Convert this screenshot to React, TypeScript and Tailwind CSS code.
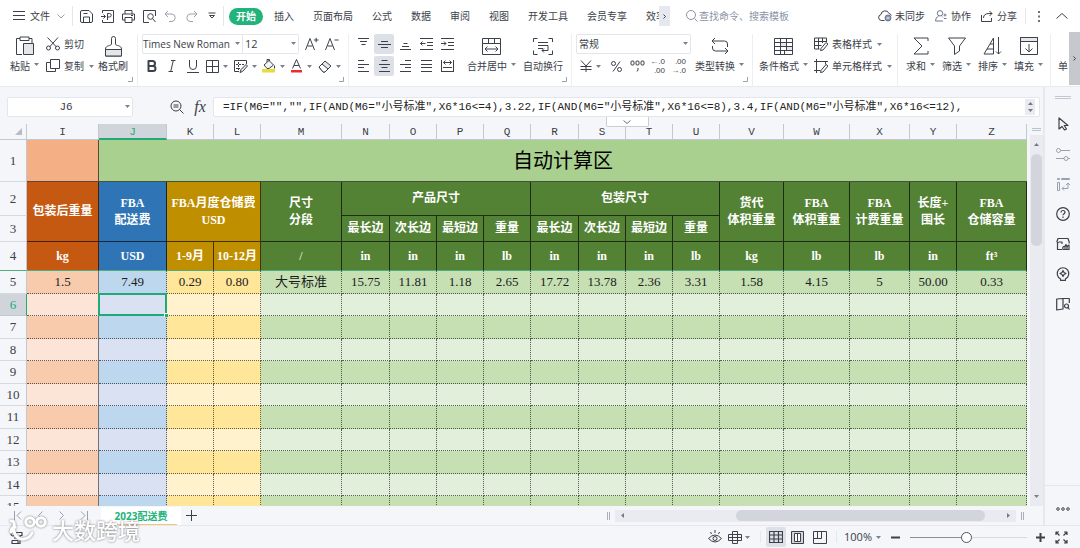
import type { ReactNode } from "react";
import clsx from "clsx";

const UI_FONT = "font-['Open_Sans','Noto_Sans_CJK_SC',sans-serif]";
const SHEET_FONT = "font-['Liberation_Serif','Noto_Sans_CJK_SC',serif]";
const MONO_FONT = "font-['Liberation_Mono','Noto_Sans_CJK_SC',monospace]";

type IconProps = { w?: number; h?: number; sw?: number; className?: string; children: ReactNode };

const Icon = ({ w = 14, h = 14, sw = 1, className, children }: IconProps) => (
  <svg
    width={w}
    height={h}
    viewBox={`0 0 ${w} ${h}`}
    fill="none"
    stroke="currentColor"
    strokeWidth={sw}
    strokeLinejoin="round"
    className={clsx("shrink-0", className)}
    aria-hidden="true"
  >
    {children}
  </svg>
);

const Caret = ({ className }: { className?: string }) => (
  <svg width="5" height="3" viewBox="0 0 5 3" className={clsx("shrink-0 fill-[#7b818c]", className)} aria-hidden="true">
    <path d="M0 0h5L2.500 3z" />
  </svg>
);

const Separator = ({ className }: { className?: string }) => (
  <span className={clsx("w-px shrink-0 bg-[#e5e7eb]", className)} />
);

const Launcher = () => (
  <Icon w={5} h={5} className="absolute right-1 bottom-1 text-gray-400">
    <path d="M4.500 0v4.500H0" />
  </Icon>
);

const Group = ({ className, launcher, children }: { className?: string; launcher?: boolean; children: ReactNode }) => (
  <div className={clsx("relative flex shrink-0 border-r border-[#eceef1]", className)}>
    {children}
    {launcher && <Launcher />}
  </div>
);

type BigButtonProps = { label: string; caret?: boolean; className?: string; children: ReactNode };

const BigButton = ({ label, caret, className, children }: BigButtonProps) => (
  <button type="button" className={clsx("flex shrink-0 flex-col items-center", className)}>
    <span className="flex h-6 items-center">{children}</span>
    <span className="flex h-4 items-center gap-1 whitespace-nowrap">
      {label}
      {caret && <Caret className="-mt-1" />}
    </span>
  </button>
);

const SmallButton = ({ label, caret, children }: { label: string; caret?: boolean; children: ReactNode }) => (
  <button type="button" className="flex h-5 items-center gap-1 whitespace-nowrap">
    {children}
    <span>{label}</span>
    {caret && <Caret className="ml-px" />}
  </button>
);

const IconButton = ({
  label,
  active,
  className,
  children,
}: {
  label: string;
  active?: boolean;
  className?: string;
  children: ReactNode;
}) => (
  <button
    type="button"
    aria-label={label}
    className={clsx("flex shrink-0 items-center justify-center", active && "rounded-xs bg-[#dde1e7]", className)}
  >
    {children}
  </button>
);

/* ---------- menu bar ---------- */

const tabs = ["插入", "页面布局", "公式", "数据", "审阅", "视图", "开发工具", "会员专享"];

const MenuBar = () => (
  <header className="flex h-8 shrink-0 items-center bg-white">
    <button type="button" className="ml-[13px] flex items-center gap-[5px]">
      <Icon w={12} h={10}>
        <path d="M0 .5h12M0 4.500h12M0 8.500h12" />
      </Icon>
      文件
      <Icon w={8} h={5} className="ml-0.5 text-gray-400">
        <path d="M.5.5L4 4 7.500.5" />
      </Icon>
    </button>
    <Separator className="ml-[7px] h-5" />
    <div className="ml-[7px] flex items-center gap-2">
      <IconButton label="保存">
        <Icon w={13} h={13}>
          <path d="M.5 2a1.500 1.500 0 011.500-1.500H9l3.500 3.500V11a1.500 1.500 0 01-1.500 1.500H2A1.500 1.500 0 01.5 11zM3.500 12.500V7h6v5.500M3.500 3.500h4" />
        </Icon>
      </IconButton>
      <IconButton label="输出为PDF">
        <Icon w={13} h={13}>
          <path d="M1.500 3V.5h11v12h-11V10M0 6.500h4.500M2.500 4.500l2 2-2 2M6.500 10V3.500h2a1.700 1.700 0 010 3.500h-2" />
        </Icon>
      </IconButton>
      <IconButton label="打印">
        <Icon w={13} h={13}>
          <path d="M3 4V.5h7V4M3 10H.5V4h12v6H10M3 7.500h7v5H3zM9 5.500h2" />
        </Icon>
      </IconButton>
      <IconButton label="打印预览">
        <Icon w={13} h={13}>
          <path d="M12.500 6V.5H.5v12H6" />
          <circle cx="7.500" cy="6.500" r="2.800" />
          <path d="M9.500 8.500l3 3.500" />
        </Icon>
      </IconButton>
      <IconButton label="撤销" className="text-gray-400">
        <Icon w={13} h={13}>
          <path d="M4 1L1 4l3 3M1 4h7a3.800 3.800 0 010 7.500H5" />
        </Icon>
      </IconButton>
      <IconButton label="恢复" className="text-gray-400">
        <Icon w={13} h={13}>
          <path d="M9 1l3 3-3 3M12 4H5a3.800 3.800 0 000 7.500h3" />
        </Icon>
      </IconButton>
      <IconButton label="自定义快速访问工具栏" className="ml-0.5">
        <Icon w={8} h={8}>
          <path d="M.5 1h7M1.500 3.500L4 6l2.500-2.500z" />
        </Icon>
      </IconButton>
    </div>
    <Separator className="ml-[7px] h-5" />
    <nav className="ml-[5px] flex min-w-0 items-center">
      <button type="button" className="h-[17px] w-[34px] shrink-0 rounded-full bg-[#22b37b] font-bold text-white">
        开始
      </button>
      <div className="ml-[11px] flex items-center gap-[19px] whitespace-nowrap">
        {tabs.map((tab) => (
          <button key={tab} type="button">
            {tab}
          </button>
        ))}
        <button type="button" className="w-[13px] overflow-hidden text-left">
          效率
        </button>
      </div>
      <IconButton label="更多选项卡" className="h-5 w-[11px] bg-[#e6e8ef]">
        <Icon w={3} h={5}>
          <path d="M.5.5l2 2-2 2" />
        </Icon>
      </IconButton>
    </nav>
    <label className="ml-4 flex min-w-0 flex-1 items-center gap-px text-[#8b93a5]">
      <Icon w={12} h={12}>
        <circle cx="5" cy="5" r="4.500" />
        <path d="M8.500 8.500l3 3" />
      </Icon>
      <input
        type="text"
        aria-label="查找命令、搜索模板"
        placeholder="查找命令、搜索模板"
        className="w-28 min-w-0 bg-transparent outline-none placeholder:text-[#8b93a5]"
      />
    </label>
    <div className="flex shrink-0 items-center gap-[10px]">
      <button type="button" className="flex items-center gap-[3px]">
        <Icon w={14} h={12}>
          <path d="M6.500 10.500H3.500a3 3 0 01-.6-5.900A4.200 4.200 0 0111 3.500a3 3 0 012.300 2" />
          <circle cx="10" cy="8" r="3" className="fill-[#8d96ad] stroke-[#6b7690]" />
          <path d="M8.500 8h3" className="stroke-white" />
        </Icon>
        未同步
      </button>
      <button type="button" className="flex items-center gap-1">
        <Icon w={12} h={12} className="text-[#6b7690]">
          <circle cx="5" cy="3.300" r="2.700" />
          <path d="M3.500 6.300Q.5 7 .5 11h7.500M7 6.500l1 1M8.500 5h3M10 3.500v3M9 8.500h2.500" />
        </Icon>
        协作
      </button>
      <button type="button" className="flex items-center gap-1">
        <Icon w={12} h={12}>
          <path d="M.5 5v6.500h10V8M2.500 8c0-3 2-4.500 5.500-4.500h3M8.500 1l2.500 2.500L8.500 6" />
        </Icon>
        分享
      </button>
    </div>
    <Separator className="ml-2 h-4" />
    <IconButton label="更多" className="ml-3">
      <svg width="2" height="11" viewBox="0 0 2 11" className="fill-gray-500" aria-hidden="true">
        <path d="M0 0h2v2H0zM0 4.500h2v2H0zM0 9h2v2H0z" />
      </svg>
    </IconButton>
    <IconButton label="收起功能区" className="mr-3 ml-4">
      <Icon w={12} h={6}>
        <path d="M.5 5.500L6 .5l5.500 5" />
      </Icon>
    </IconButton>
  </header>
);

/* ---------- ribbon ---------- */

const alignTop = [
  { label: "顶端对齐", d: "M1 1.500h11M3 4.500h7M4.500 7.500h4" },
  { label: "垂直居中", d: "M3 4.500h7M0 7.500h13M3 10.500h7", active: true },
  { label: "底端对齐", d: "M4.500 6.500h4M3 9.500h7M1 12.500h11" },
  { label: "减少缩进量", d: "M0 1.500h13M7 5.500h6M7 8.500h6M0 12.500h13M.5 6.500h5M2.500 4.500l-2 2 2 2" },
  { label: "增加缩进量", d: "M0 1.500h13M7 5.500h6M7 8.500h6M0 12.500h13M0 6.500h5M3 4.500l2 2-2 2" },
];

const alignBottom = [
  { label: "左对齐", d: "M1 1.500h6M1 5.500h11M1 8.500h6M1 12.500h11" },
  { label: "水平居中", d: "M3.500 1.500h6M1 5.500h11M3.500 8.500h6M1 12.500h11", active: true },
  { label: "右对齐", d: "M6 1.500h6M1 5.500h11M6 8.500h6M1 12.500h11" },
  { label: "两端对齐", d: "M1 1.500h11M1 5.500h11M1 8.500h11M1 12.500h11" },
  { label: "分散对齐", d: "M.5 1v12M12.500 1v12M2.500 3.500h8M4.500 1.500l-2 2 2 2M8.500 1.500l2 2-2 2M2 8.500h9M0 12.500h13" },
];

const decimals = [
  { label: "增加小数位数", top: "←.0", bottom: ".00" },
  { label: "减少小数位数", top: ".00", bottom: "→.0" },
];

const PencilOverlay = () => <path d="M7 11.500l5-6 2 1.500-5 6-2.500.5z" className="fill-white" />;

const Ribbon = () => (
  <section className="flex h-[54px] shrink-0 bg-white">
    <div className="flex min-w-0 flex-1 overflow-hidden pt-0.5">
      <Group launcher className="w-[138px] pl-[10px]">
        <BigButton label="粘贴" caret>
          <Icon w={20} h={20}>
            <path d="M7 18.500H1.500v-16H5M14 2.500h3V7M5 1h9v3.500H5z" />
            <path d="M8.500 7.500h10v11h-10z" className="fill-[#e4e6ea]" />
          </Icon>
        </BigButton>
        <div className="ml-[7px] flex flex-col gap-0.5">
          <SmallButton label="剪切">
            <Icon>
              <path d="M1.500.5l9 9.500M12 .5L3.500 10" />
              <circle cx="2.500" cy="11" r="2" />
              <circle cx="11.500" cy="11" r="2" />
            </Icon>
          </SmallButton>
          <SmallButton label="复制" caret>
            <Icon>
              <path d="M4.500.5h9v9h-9zM4.500 3.500h-4v9h9v-3" />
            </Icon>
          </SmallButton>
        </div>
        <BigButton label="格式刷" className="ml-1">
          <Icon w={17} h={21}>
            <path d="M6.500 8V2.500a2 2 0 014 0V8c0 2 6 1 6 5v7H.5v-7c0-4 6-3 6-5z" />
            <path d="M.5 13.500h16v6.500H.5z" className="fill-[#e4e6ea]" />
          </Icon>
        </BigButton>
      </Group>

      <Group launcher className="w-[211px] flex-col gap-0.5 pl-1">
        <div className="flex h-5 items-center">
          <div className="relative w-[101px]">
            <select
              aria-label="字体"
              className="h-5 w-full appearance-none rounded-l-xs border border-[#e3e6ea] bg-white text-[10px]"
            >
              <option>Times New Roman</option>
            </select>
            <Caret className="pointer-events-none absolute top-2 right-[3px]" />
          </div>
          <div className="relative w-14">
            <select
              aria-label="字号"
              className="h-5 w-full appearance-none rounded-r-xs border border-l-0 border-[#e3e6ea] bg-white pl-0.5 text-[11px]"
            >
              <option>12</option>
            </select>
            <Caret className="pointer-events-none absolute top-2 right-[3px]" />
          </div>
          <IconButton label="增大字号" className="ml-[6px]">
            <Icon w={14} h={14}>
              <path d="M.5 13L5 1.500 9.500 13M2.500 9h5M9 3h4.500M11.200.8v4.500" />
            </Icon>
          </IconButton>
          <IconButton label="减小字号" className="ml-[6px]">
            <Icon w={14} h={14}>
              <path d="M.5 13L5 1.500 9.500 13M2.500 9h5M9.500 3h4" />
            </Icon>
          </IconButton>
        </div>
        <div className="flex h-5 items-center">
          <IconButton label="加粗" className="w-5">
            <Icon w={10} h={12} sw={2}>
              <path d="M1.500 1h4a2.500 2.500 0 010 5h-4zM1.500 6h4.500a2.500 2.500 0 010 5H1.500z" />
            </Icon>
          </IconButton>
          <IconButton label="倾斜" className="w-5">
            <Icon w={8} h={12}>
              <path d="M3 .5h4.500M.5 11.500H5M5.300.5l-2.600 11" />
            </Icon>
          </IconButton>
          <IconButton label="下划线" className="w-[21px]">
            <Icon w={12} h={13}>
              <path d="M2.500 0v6a3.500 3.500 0 007 0V0M0 12.500h12" />
            </Icon>
          </IconButton>
          <IconButton label="边框" className="w-7 gap-1">
            <Icon w={13} h={13}>
              <path d="M.5.5h12v12H.5zM6.500.5v12M.5 6.500h12" />
            </Icon>
            <Caret />
          </IconButton>
          <IconButton label="绘制边框" className="w-7 gap-1">
            <Icon w={14} h={13}>
              <path d="M12.500 4V.5H.5v11H5" />
              <path d="M4.500 2v9M2 4.500h8M2 8.500h4" strokeDasharray="2 1" />
              <path d="M7 9.500l5-5 1.500 1.500-5 5.500-2.500 1z" className="fill-gray-200" />
            </Icon>
            <Caret />
          </IconButton>
          <IconButton label="填充颜色" className="w-7 gap-1">
            <Icon w={14} h={14}>
              <path d="M2 6l5-4.500L11.500 6 7 9.500H5z" className="fill-gray-100" />
              <path d="M5 3V.5h2.500V2M12.500 6.500v3" />
              <path d="M0 10h13v3.500H0z" className="fill-[#e6dc3a] stroke-none" />
            </Icon>
            <Caret />
          </IconButton>
          <IconButton label="字体颜色" className="w-7 gap-1">
            <Icon w={13} h={14}>
              <path d="M2.500 9.500L6.500.5l4 9M4 6.500h5" />
              <path d="M1 11h11v2.500H1z" className="fill-[#e8302e] stroke-none" />
            </Icon>
            <Caret />
          </IconButton>
          <IconButton label="清除" className="w-7 gap-1">
            <Icon w={14} h={13}>
              <path d="M1 7l6-6 6 5-6 6H5z" className="fill-gray-200" />
              <path d="M4 4l6 5-3 3H5L1 7z" className="fill-white" />
            </Icon>
            <Caret />
          </IconButton>
        </div>
      </Group>

      <Group launcher className="w-[223px] pl-1">
        <div className="flex flex-col gap-0.5">
          {[alignTop, alignBottom].map((row, i) => (
            <div key={i} className="flex gap-px">
              {row.map((item) => (
                <IconButton key={item.label} label={item.label} active={item.active} className="h-5 w-5">
                  <Icon w={13} h={14}>
                    <path d={item.d} />
                  </Icon>
                </IconButton>
              ))}
            </div>
          ))}
        </div>
        <BigButton label="合并居中" caret className="ml-[10px]">
          <Icon w={20} h={18}>
            <path d="M.5 1.500h18v16H.5zM.5 6.500h18M6.500 1.500v5M12.500 1.500v5M3 12h13M5.500 9.500L3 12l2.500 2.500M13.500 9.500L16 12l-2.500 2.500" />
          </Icon>
        </BigButton>
        <BigButton label="自动换行" className="ml-[7px]">
          <Icon w={20} h={18}>
            <path d="M4.500 1.500h-4V5M.5 13.500v4h4M15.500 1.500h4V5M19.500 13.500v4h-4M5 5.500h10M5 8.500h10v5H9M5 11.500h5M11 11.500l-2 2 2 2" />
          </Icon>
        </BigButton>
      </Group>

      <Group launcher className="w-[181px] pl-1">
        <div className="flex flex-col gap-0.5">
          <div className="relative w-[115px]">
            <select
              aria-label="数字格式"
              className="h-5 w-full appearance-none rounded-xs border border-[#e3e6ea] bg-white pl-0.5 text-[10px]"
            >
              <option>常规</option>
            </select>
            <Caret className="pointer-events-none absolute top-2 right-[3px]" />
          </div>
          <div className="flex h-5 items-center">
            <IconButton label="货币" className="w-[29px] gap-1">
              <Icon w={12} h={12}>
                <path d="M1 .5l5 5.500 5-5.500M6 6v6M.5 6.500h11M.5 9.500h11" />
              </Icon>
              <Caret />
            </IconButton>
            <IconButton label="百分比" className="w-[22px]">
              <Icon w={11} h={11}>
                <circle cx="2.500" cy="2.500" r="2" />
                <circle cx="8.500" cy="8.500" r="2" />
                <path d="M9 .5l-7 10" />
              </Icon>
            </IconButton>
            <IconButton label="千位分隔" className="w-[21px]">
              <Icon w={15} h={12}>
                <rect x="1" y="1" width="3" height="4" rx="1" />
                <rect x="6" y="1" width="3" height="4" rx="1" />
                <rect x="11" y="1" width="3" height="4" rx="1" />
                <path d="M8 8v2l-1 1.500" />
              </Icon>
            </IconButton>
            {decimals.map((item) => (
              <button
                key={item.label}
                type="button"
                aria-label={item.label}
                className="flex w-[21px] flex-col items-end pr-1 font-['Liberation_Sans',sans-serif] text-[8px] leading-[9px]"
              >
                <span>{item.top}</span>
                <span>{item.bottom}</span>
              </button>
            ))}
          </div>
        </div>
        <BigButton label="类型转换" caret className="ml-1">
          <Icon w={18} h={18}>
            <path d="M4 1L1 4l3 3M1 4h12.500a3 3 0 013 3v3M14 17l3-3-3-3M17 14H4.500a3 3 0 01-3-3V9" />
          </Icon>
        </BigButton>
      </Group>

      <Group className="w-[145px] pl-[6px]">
        <BigButton label="条件格式" caret>
          <Icon w={19} h={18}>
            <path d="M6.500 5.500h6v4h-6zM12.500 9.500h6v4h-6z" className="fill-gray-200" />
            <path d="M.5 1.500h18v16H.5zM.5 5.500h18M.5 9.500h18M.5 13.500h18M6.500 1.500v16M12.500 1.500v8M10.500 13.500v4" />
          </Icon>
        </BigButton>
        <div className="ml-[6px] flex flex-col gap-0.5">
          <SmallButton label="表格样式" caret>
            <Icon>
              <path d="M12.500 5V1H.5v11h5M4.500 1v11M8.500 1v5M.5 4.500h12M.5 8.500h7" />
              <PencilOverlay />
            </Icon>
          </SmallButton>
          <SmallButton label="单元格样式" caret>
            <Icon>
              <path d="M0 2.500h14M2.500 0v14M11.500 2.500v3M2.500 11.500h4M0 11.500h2" />
              <PencilOverlay />
            </Icon>
          </SmallButton>
        </div>
      </Group>

      <Group className="w-[153px] gap-[7px] pl-2">
        <BigButton label="求和" caret>
          <Icon w={16} h={18}>
            <path d="M15 4V1H1l8 8-8 8h14v-3" />
          </Icon>
        </BigButton>
        <BigButton label="筛选" caret>
          <Icon w={18} h={18}>
            <path d="M.5 1h17L11.500 9v5l-5 3.500V9z" />
          </Icon>
        </BigButton>
        <BigButton label="排序" caret>
          <Icon w={19} h={18}>
            <path d="M1 17L10.500 1v16zM4 12h6.500M7 7h3.500M15.500 0v17M13 14.500l2.500 2.500 2.500-2.500" />
          </Icon>
        </BigButton>
        <BigButton label="填充" caret>
          <Icon w={18} h={18}>
            <path d="M.5.5h17v4H.5z" className="fill-gray-200" />
            <path d="M.5.5h17v17H.5zM9 7v8M5.500 11.500L9 15l3.500-3.500" />
          </Icon>
        </BigButton>
      </Group>
      <BigButton label="单" className="ml-[7px]">
        <span />
      </BigButton>
    </div>
    <IconButton label="向右滚动功能区" className="h-[53px] w-[11px] bg-[#c6c8ce]">
      <Icon w={3} h={5}>
        <path d="M.5.5l2 2-2 2" />
      </Icon>
    </IconButton>
  </section>
);

/* ---------- formula bar ---------- */

const formula =
  '=IF(M6="","",IF(AND(M6="小号标准",X6*16<=4),3.22,IF(AND(M6="小号标准",X6*16<=8),3.4,IF(AND(M6="小号标准",X6*16<=12),';

const FormulaBar = () => (
  <div className="relative flex h-[37px] shrink-0 items-center pt-[3px] pr-[3px] pl-[7px]">
    <div className="relative w-[126px] shrink-0">
      <input
        aria-label="名称框"
        defaultValue="J6"
        className={`h-5 w-full rounded-xs border border-[#e3e6ea] bg-white pr-2 text-center text-[11px] ${MONO_FONT}`}
      />
      <Caret className="absolute top-2 right-[3px]" />
    </div>
    <IconButton label="缩小" className="ml-[37px]">
      <Icon w={15} h={14}>
        <circle cx="6" cy="6" r="5" />
        <path d="M9.500 9.500l4 4M3.500 5h5M3.500 7h5" />
      </Icon>
    </IconButton>
    <button type="button" className="ml-2 w-[14px] font-['Liberation_Serif',serif] text-base leading-5 italic">
      fx
    </button>
    <div className="ml-[6px] flex h-5 min-w-0 flex-1 items-center rounded-xs border border-[#e3e6ea] bg-white pr-1 pl-[9px]">
      <input
        aria-label="编辑栏"
        defaultValue={formula}
        className={`min-w-0 flex-1 bg-transparent text-[11px] text-[#222] outline-none ${MONO_FONT}`}
      />
      <IconButton label="展开编辑栏" className="h-4 w-[10px] bg-[#e9ebf1]">
        <svg width="5" height="10" viewBox="0 0 5 10" className="fill-[#737a8c]" aria-hidden="true">
          <path d="M0 3L2.500 0 5 3zM0 7h5L2.500 10z" />
        </svg>
      </IconButton>
    </div>
    <button
      type="button"
      aria-label="折叠编辑栏"
      className="absolute top-[30px] left-[58.1%] z-20 flex h-[10px] w-[43px] items-center justify-center rounded-b-xs border border-t-0 border-[#c9cdd4] bg-white"
    >
      <Icon w={8} h={4} className="text-gray-500">
        <path d="M.5.5L4 3.500 7.500.5" />
      </Icon>
    </button>
  </div>
);

/* ---------- sheet ---------- */

const columns = [
  { name: "I", width: 72 },
  { name: "J", width: 68 },
  { name: "K", width: 47 },
  { name: "L", width: 47 },
  { name: "M", width: 81 },
  { name: "N", width: 48 },
  { name: "O", width: 47 },
  { name: "P", width: 47 },
  { name: "Q", width: 47 },
  { name: "R", width: 48 },
  { name: "S", width: 47 },
  { name: "T", width: 47 },
  { name: "U", width: 47 },
  { name: "V", width: 64 },
  { name: "W", width: 66 },
  { name: "X", width: 60 },
  { name: "Y", width: 47 },
  { name: "Z", width: 70 },
];

const units = ["kg", "USD", "1-9月", "10-12月", "/", "in", "in", "in", "lb", "in", "in", "in", "lb", "kg", "lb", "lb", "in", "ft³"];

const values = [
  "1.5", "7.49", "0.29", "0.80", "大号标准", "15.75", "11.81", "1.18", "2.65",
  "17.72", "13.78", "2.36", "3.31", "1.58", "4.15", "5", "50.00", "0.33",
];

const sides = ["最长边", "次长边", "最短边", "重量", "最长边", "次长边", "最短边", "重量"];

const rowNumbers = [5, 6, 7, 8, 9, 10, 11, 12, 13, 14, 15];

const headColor = (col: number) =>
  col === 0 ? "bg-[#c65911]" : col === 1 ? "bg-[#2f75b5]" : col < 4 ? "bg-[#bf8f00]" : "bg-[#548235]";

const bodyColor = (col: number, even: boolean) => {
  if (col === 0) return even ? "bg-[#fce4d6]" : "bg-[#f8cbad]";
  if (col === 1) return even ? "bg-[#d9e1f2]" : "bg-[#bdd7ee]";
  if (col < 4) return even ? "bg-[#fff2cc]" : "bg-[#ffe699]";
  return even ? "bg-[#e2efda]" : "bg-[#c6e0b4]";
};

const RowHead = ({ n, active, frozen }: { n: number; active?: boolean; frozen?: boolean }) => (
  <th
    scope="row"
    className={clsx(
      "border-r border-b p-0 text-center text-[13px] leading-4 font-normal",
      active
        ? "border-r-[#22a978] border-b-[#c3c8d0] bg-[#d0d4db] text-[#22a978]"
        : "border-r-[#c3c8d0] bg-[#f5f6fa] text-[#3b3f46]",
      !active && (frozen ? "border-b-[#4cae80]" : "border-b-[#d5d9e0]"),
    )}
  >
    {n}
  </th>
);

const HeadCell = ({
  col,
  rowSpan,
  colSpan,
  children,
}: {
  col: number;
  rowSpan?: number;
  colSpan?: number;
  children: ReactNode;
}) => (
  <th
    scope="col"
    rowSpan={rowSpan}
    colSpan={colSpan}
    className={clsx(
      "border-r border-b border-black/65 p-0 text-center text-xs leading-[17px] font-bold whitespace-nowrap text-white",
      headColor(col),
    )}
  >
    {children}
  </th>
);

const Sheet = () => (
  <div className="min-w-0 flex-1 overflow-hidden bg-white">
    <table className={`w-full table-fixed border-separate border-spacing-0 ${SHEET_FONT}`}>
      <colgroup>
        <col className="w-[27px]" />
        {columns.map((c) => (
          <col key={c.name} style={{ width: c.width }} />
        ))}
      </colgroup>
      <thead>
        <tr className={`h-4 text-[11px] leading-3 text-[#3b3f46] ${MONO_FONT}`}>
          <td className="border-r border-b border-[#c3c8d0] bg-[#f5f6fa] p-0">
            <svg width="7" height="7" viewBox="0 0 7 7" className="ml-[15px] fill-[#b9bcc2]" aria-hidden="true">
              <path d="M7 0v7H0z" />
            </svg>
          </td>
          {columns.map((c) => (
            <th
              key={c.name}
              scope="col"
              className={clsx(
                "border-r border-r-[#c3c8d0] p-0 pt-px font-normal",
                c.name === "J"
                  ? "border-b-2 border-b-[#22a978] bg-[#d0d4db] text-[#22a978]"
                  : "border-b border-b-[#c3c8d0] bg-[#f5f6fa]",
              )}
            >
              {c.name}
            </th>
          ))}
        </tr>
      </thead>
      <tbody>
        <tr className="h-[42px]">
          <RowHead n={1} />
          <td className="border-r border-b border-black/60 bg-[#f4b084] p-0" />
          <td colSpan={17} className="border-b border-black/60 bg-[#a9d08e] p-0 text-center text-xl leading-6 text-black">
            自动计算区
          </td>
        </tr>
        <tr className="h-[34px]">
          <RowHead n={2} />
          <HeadCell col={0} rowSpan={2}>包装后重量</HeadCell>
          <HeadCell col={1} rowSpan={2}>FBA<br />配送费</HeadCell>
          <HeadCell col={2} rowSpan={2} colSpan={2}>FBA月度仓储费<br />USD</HeadCell>
          <HeadCell col={4} rowSpan={2}>尺寸<br />分段</HeadCell>
          <HeadCell col={5} colSpan={4}>产品尺寸</HeadCell>
          <HeadCell col={9} colSpan={4}>包装尺寸</HeadCell>
          <HeadCell col={13} rowSpan={2}>货代<br />体积重量</HeadCell>
          <HeadCell col={14} rowSpan={2}>FBA<br />体积重量</HeadCell>
          <HeadCell col={15} rowSpan={2}>FBA<br />计费重量</HeadCell>
          <HeadCell col={16} rowSpan={2}>长度+<br />围长</HeadCell>
          <HeadCell col={17} rowSpan={2}>FBA<br />仓储容量</HeadCell>
        </tr>
        <tr className="h-[26px]">
          <RowHead n={3} />
          {sides.map((side, i) => (
            <HeadCell key={i} col={5 + i}>{side}</HeadCell>
          ))}
        </tr>
        <tr className="h-[29px]">
          <RowHead n={4} frozen />
          {units.map((unit, i) => (
            <th
              key={i}
              className={clsx(
                "border-r border-b border-r-black/65 border-b-[#4cae80] p-0 text-center text-xs leading-4 whitespace-nowrap text-white",
                unit === "/" ? "font-normal" : "font-bold",
                headColor(i),
              )}
            >
              {unit}
            </th>
          ))}
        </tr>
        {rowNumbers.map((n) => {
          const even = n % 2 === 0;
          return (
            <tr key={n} className={even ? "h-[22px]" : "h-[23px]"}>
              <RowHead n={n} active={n === 6} />
              {columns.map((c, i) => {
                const selected = n === 6 && c.name === "J";
                return (
                  <td
                    key={c.name}
                    className={clsx(
                      "border-r border-b border-b-black/60 p-0 text-center text-[13px] leading-4 whitespace-nowrap text-[#1c1c1c] [border-bottom-style:dotted]",
                      i === 0 ? "border-r-[#6f7275]" : "border-r-black/60 [border-right-style:dotted]",
                      selected && "relative",
                      bodyColor(i, even),
                    )}
                  >
                    {n === 5 && values[i]}
                    {selected && (
                      <span className="absolute -inset-px z-10 border-2 border-[#22a978]">
                        <span className="absolute -right-[3px] -bottom-[3px] h-1 w-1 border-t border-l border-white bg-[#22a978]" />
                      </span>
                    )}
                  </td>
                );
              })}
            </tr>
          );
        })}
      </tbody>
    </table>
  </div>
);

const VerticalScroll = () => (
  <div className="flex w-4 shrink-0 flex-col pl-[3px]">
    <div className="mx-0.5 my-1 h-[3px] border-y border-[#b9c3cf]" />
    <div className="flex min-h-0 flex-1 flex-col items-center bg-[#e9ebf1] py-2">
      <svg width="5" height="3" viewBox="0 0 5 3" className="fill-[#737a8c]" aria-hidden="true">
        <path d="M0 3L2.500 0 5 3z" />
      </svg>
      <div className="mt-2 h-[26%] w-[11px] rounded-full bg-[#d2d5dc]" />
      <Caret className="mt-auto" />
    </div>
  </div>
);

const SheetTabs = () => (
  <div className="flex h-[19px] shrink-0 items-center">
    <div className="flex w-[101px] shrink-0 items-center gap-4 pl-[14px] text-gray-400">
      <IconButton label="第一张工作表">
        <Icon w={8} h={9}><path d="M.5 0v9M7 .5l-4 4 4 4" /></Icon>
      </IconButton>
      <IconButton label="上一张工作表">
        <Icon w={5} h={9}><path d="M4.500.5l-4 4 4 4" /></Icon>
      </IconButton>
      <IconButton label="下一张工作表">
        <Icon w={5} h={9}><path d="M.5.5l4 4-4 4" /></Icon>
      </IconButton>
      <IconButton label="最后一张工作表">
        <Icon w={8} h={9}><path d="M1 .5l4 4-4 4M7.500 0v9" /></Icon>
      </IconButton>
    </div>
    <button type="button" className="relative h-[18px] w-20 shrink-0 bg-white font-bold text-[#22b37b]">
      2023配送费
      <span className="absolute inset-x-1 bottom-0 h-px bg-[#f3c77a]" />
    </button>
    <IconButton label="新建工作表" className="ml-[5px]">
      <Icon w={11} h={11}><path d="M5.500 0v11M0 5.500h11" /></Icon>
    </IconButton>
    <div className="ml-auto flex w-[41.8%] items-center gap-[5px] pr-[19px]">
      <span className="h-2 w-[3px] shrink-0 border-x border-[#aab0bb]" />
      <div className="flex h-3 flex-1 items-center bg-[#e9ebf1] px-[6px]">
        <svg width="3" height="5" viewBox="0 0 3 5" className="fill-[#737a8c]" aria-hidden="true">
          <path d="M3 0v5L0 2.500z" />
        </svg>
        <div className="mr-[22px] ml-auto h-[11px] w-[64%] rounded-full bg-[#d2d5dc]" />
        <svg width="3" height="5" viewBox="0 0 3 5" className="fill-[#737a8c]" aria-hidden="true">
          <path d="M0 0v5l3-2.500z" />
        </svg>
      </div>
      <span className="h-2 w-[3px] shrink-0 border-x border-[#aab0bb]" />
    </div>
  </div>
);

const SideBar = () => (
  <aside className="flex w-[37px] shrink-0 flex-col items-center border-l-2 border-[#e6e8ed] pt-[9px]">
    <div className="h-[3px] w-4 border-y border-[#c3c8d0]" />
    <div className="mt-[18px] flex flex-col gap-4">
      <IconButton label="选择">
        <Icon sw={1.2}><path d="M3 1v11l3-2.500L8.500 13l2-1-2.300-3.500H12z" /></Icon>
      </IconButton>
      <IconButton label="属性" className="text-gray-400">
        <Icon>
          <circle cx="2.500" cy="3.500" r="2" />
          <circle cx="10" cy="11.500" r="2" />
          <path d="M4.500 3.500H14M0 11.500h8M12 11.500h2" />
        </Icon>
      </IconButton>
      <IconButton label="分析" className="text-gray-400">
        <Icon><path d="M1.500 1.500h2v1h-2zM1.500 5.500h2v8h-2zM5.500 1.500h8v1h-8zM12 6.500v5H6.500M10 8L12 6l2 2M8 9.500l-2 2 2 2" /></Icon>
      </IconButton>
      <IconButton label="帮助">
        <Icon sw={1.2}>
          <circle cx="7" cy="7" r="6.300" />
          <path d="M5 5.500a2 2 0 114 0c0 1.300-2 1.300-2 2.800M7 9.500V11" />
        </Icon>
      </IconButton>
      <IconButton label="表情">
        <Icon sw={1.2}>
          <path d="M.8 5L2 1.500h10L13.200 5v1.500M1.500 6v6.500H6M.8 5q1 1.500 2.200 0h3v2M7 12.500c-1-3 1-3.500 2-3l1-2 1 2 2-1.500v4.500z" />
          <path d="M9 12.500v-3M11 12.500V9" />
        </Icon>
      </IconButton>
      <IconButton label="技巧">
        <Icon sw={1.2}>
          <path d="M4.500 11.800a5.800 5.800 0 115 0v1.500h-5z" />
          <path d="M7 3.500l1 2 2 1-2 1-1 2-1-2-2-1 2-1z" />
        </Icon>
      </IconButton>
      <IconButton label="手册">
        <Icon sw={1.2}>
          <path d="M7 12L.7 13V2L7 1.500V12zM7 1.500h6.300V6" />
          <circle cx="10.500" cy="9" r="2" />
          <path d="M12 10.500l1.500 2" />
        </Icon>
      </IconButton>
    </div>
    <div className="mt-auto flex h-10 w-full justify-center border-t border-[#e3e6ea] pt-[21px]">
      <IconButton label="更多工具" className="h-1">
        <Icon w={14} h={4}>
          <circle cx="2" cy="2" r="1.300" />
          <circle cx="7" cy="2" r="1.300" />
          <circle cx="12" cy="2" r="1.300" />
        </Icon>
      </IconButton>
    </div>
  </aside>
);

const StatusBar = () => (
  <footer className="flex h-[23px] shrink-0 items-center border-t border-[#e6e8ed] pr-3 pl-[10px]">
    <IconButton label="录制宏">
      <Icon w={13} h={13} sw={1.2}>
        <circle cx="3" cy="3" r="2" />
        <path d="M6 1.500h6v3h-2v8H2v-3M2 9.500h6v3M4 7h4" />
      </Icon>
    </IconButton>
    <div className="ml-auto flex items-center">
      <IconButton label="护眼模式">
        <Icon w={14} h={14}>
          <path d="M.5 8.500Q7 1.500 13.500 8.500 7 15.500.5 8.500zM7 0v3M2.500 2l1 2M11.500 2l-1 2" />
          <circle cx="7" cy="8.500" r="2" />
        </Icon>
      </IconButton>
      <IconButton label="阅读模式" className="ml-[6px] gap-[3px]">
        <Icon w={14} h={13}>
          <path d="M4.500.5h5v12h-5zM.5 3.500h13v6H.5zM.5 6.500h13" />
        </Icon>
        <Caret />
      </IconButton>
      <Separator className="ml-[10px] h-3" />
      <IconButton label="普通视图" active className="ml-[5px] h-5 w-5">
        <Icon w={14} h={12} sw={1.2}>
          <path d="M.5.5h13v11H.5zM.5 4h13M.5 8h13M5 .5v11M9.500.5v11" />
        </Icon>
      </IconButton>
      <IconButton label="分页预览" className="ml-[5px]">
        <Icon w={13} h={13}>
          <path d="M.5.5h12v12H.5z" className="fill-gray-300" />
          <path d="M3.500 2.500h6v8h-6zM6.500 2.500v8" className="fill-white" />
        </Icon>
      </IconButton>
      <IconButton label="页面布局视图" className="ml-[9px]">
        <Icon w={14} h={13}>
          <path d="M.5.5h13v12H.5zM.5 7.500h8v-7M4.500.5v7" />
        </Icon>
      </IconButton>
      <Separator className="ml-[9px] h-3" />
      <button type="button" className="ml-[7px] flex items-center gap-1 text-[11px]">
        100%
        <Caret />
      </button>
      <IconButton label="缩小显示比例" className="ml-[10px]">
        <Icon w={9} h={9} sw={2}><path d="M0 4.500h9" /></Icon>
      </IconButton>
      <input
        type="range"
        aria-label="显示比例"
        min={0}
        max={100}
        defaultValue={48}
        className="ml-[10px] h-3 w-[117px] appearance-none bg-transparent [&::-webkit-slider-runnable-track]:h-px [&::-webkit-slider-runnable-track]:bg-linear-to-r [&::-webkit-slider-runnable-track]:from-[#8b9099] [&::-webkit-slider-runnable-track]:from-50% [&::-webkit-slider-runnable-track]:to-[#d5d9e0] [&::-webkit-slider-runnable-track]:to-50% [&::-webkit-slider-thumb]:-mt-[5px] [&::-webkit-slider-thumb]:h-[11px] [&::-webkit-slider-thumb]:w-[11px] [&::-webkit-slider-thumb]:appearance-none [&::-webkit-slider-thumb]:rounded-full [&::-webkit-slider-thumb]:border [&::-webkit-slider-thumb]:border-gray-600 [&::-webkit-slider-thumb]:bg-white"
      />
      <IconButton label="放大显示比例" className="ml-[9px]">
        <Icon w={9} h={9} sw={2}><path d="M0 4.500h9M4.500 0v9" /></Icon>
      </IconButton>
      <IconButton label="全屏显示" className="ml-[10px]">
        <Icon w={13} h={13} sw={1.2}>
          <path d="M1 4V1h3M1 1l3.500 3.500M9 1h3v3M12 1L8.500 4.500M1 9v3h3M1 12l3.500-3.500M12 9v3H9M12 12L8.500 8.500" />
        </Icon>
      </IconButton>
    </div>
  </footer>
);

const Watermark = () => (
  <div className="pointer-events-none absolute bottom-[5px] left-2 z-30 flex items-center gap-1 text-white [filter:drop-shadow(0_0_1px_#777)]">
    <Icon w={40} h={28} sw={3}>
      <path d="M3 6q4 0 3 5t1 8q3 6 9 5 6-1 8-6M3 17q0-4 4-5" strokeLinecap="round" />
      <circle cx="22" cy="7" r="4.300" />
      <circle cx="33" cy="7" r="4.300" />
    </Icon>
    <span className="font-['Noto_Sans_CJK_SC',sans-serif] text-[22px] leading-7 font-medium">大数跨境</span>
  </div>
);

export default function App() {
  return (
    <div className={`relative flex h-screen flex-col overflow-hidden bg-[#f5f6fa] text-[10px] leading-4 text-[#3b4049] ${UI_FONT}`}>
      <MenuBar />
      <Ribbon />
      <main className="flex min-h-0 flex-1 border-t border-[#e8eaee]">
        <div className="flex min-w-0 flex-1 flex-col">
          <FormulaBar />
          <div className="flex min-h-0 flex-1">
            <Sheet />
            <VerticalScroll />
          </div>
          <SheetTabs />
        </div>
        <SideBar />
      </main>
      <StatusBar />
      <Watermark />
    </div>
  );
}
